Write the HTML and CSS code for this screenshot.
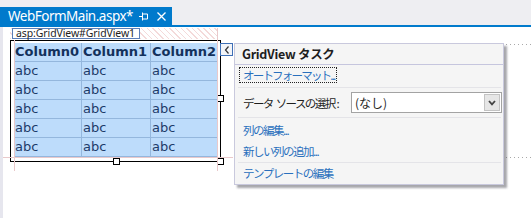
FILE: index.html
```html
<!DOCTYPE html>
<html lang="ja">
<head>
<meta charset="utf-8">
<title>WebFormMain.aspx</title>
<link rel="stylesheet" href="styles.css">
</head>
<body>
<div class="titlebar">
  <div class="tab">
    <span class="tab-title">WebFormMain.aspx*</span>
    <svg class="tab-pin" width="10" height="9" viewBox="0 0 10 9"><path d="M0 4.5H3.5M3.5 0.5V8.5M3.5 2H8.5V7H3.5" fill="none" stroke="#fff" stroke-width="1"/></svg>
    <svg class="tab-close" width="9" height="9" viewBox="0 0 9 9"><path d="M0.5 0.5L8.5 8.5M8.5 0.5L0.5 8.5" fill="none" stroke="#fff" stroke-width="1.3"/></svg>
  </div>
</div>
<div class="workspace">
  <div class="gutter"></div>
  <div class="surface">
    <div class="tagstrip"><span class="tag">asp:GridView#GridView1</span></div>
    <div class="selection">
      <div class="grid">
        <div class="cell head">Column0</div><div class="cell head">Column1</div><div class="cell head last">Column2</div>
        <div class="cell">abc</div><div class="cell">abc</div><div class="cell last">abc</div>
        <div class="cell">abc</div><div class="cell">abc</div><div class="cell last">abc</div>
        <div class="cell">abc</div><div class="cell">abc</div><div class="cell last">abc</div>
        <div class="cell">abc</div><div class="cell">abc</div><div class="cell last">abc</div>
        <div class="cell">abc</div><div class="cell">abc</div><div class="cell last">abc</div>
      </div>
      <span class="handle handle-right"></span>
      <span class="handle handle-bottom"></span>
      <span class="handle handle-corner"></span>
    </div>
    <div class="guide guide-h"></div>
    <div class="guide guide-v guide-left"></div>
    <div class="guide guide-v guide-right"></div>
    <div class="dots dots-top"></div>
    <div class="dots dots-bottom"></div>
    <div class="smarttag"><svg width="6" height="8" viewBox="0 0 6 8"><path d="M4.5 0.5L1.5 4L4.5 7.5" fill="none" stroke="#333" stroke-width="1.2"/></svg></div>
    <div class="tasks">
      <div class="tasks-title">GridView タスク</div>
      <div class="row row-auto"><span class="focus-link">オートフォーマット...</span></div>
      <div class="sep"></div>
      <div class="row row-ds">
        <span class="label">データ<span class="gap"></span>ソースの選択<span class="colon">:</span></span>
        <div class="select"><span class="select-text">(なし)</span><span class="select-btn"><svg width="8" height="6" viewBox="0 0 8 6"><path d="M1 1L4 4.3L7 1" fill="none" stroke="#444" stroke-width="1.8"/></svg></span></div>
      </div>
      <div class="sep"></div>
      <div class="row row-links">
        <span class="link">列の編集...</span>
        <span class="link">新しい列の追加...</span>
      </div>
      <div class="sep"></div>
      <div class="row row-template"><span class="link">テンプレートの編集</span></div>
    </div>
  </div>
</div>
</body>
</html>
```
FILE: styles.css
```css
html, body {
  margin: 0;
  padding: 0;
  background: #ffffff;
  width: 531px;
  height: 218px;
  overflow: hidden;
}

body {
  font-family: "Noto Sans", "Noto Sans CJK JP", sans-serif;
}

.titlebar {
  box-sizing: border-box;
  height: 27px;
  padding-top: 7px;
  background: #eeeef2;
  border-bottom: 2px solid #007acc;
}

.tab {
  width: 172px;
  height: 18px;
  background: #007acc;
  color: #ffffff;
  display: flex;
  align-items: center;
  box-sizing: border-box;
  padding-left: 8px;
}

.tab-title {
  font-size: 13.5px;
  letter-spacing: -0.5px;
  line-height: 18px;
  width: 131px;
  white-space: nowrap;
}

.tab-pin {
  margin-top: 1px;
}

.tab-close {
  margin-left: 8px;
  margin-top: 1px;
}

.workspace {
  display: flex;
  height: 191px;
}

.gutter {
  width: 3px;
  background: #e6e6ee;
}

.surface {
  flex: 1;
  position: relative;
  padding: 1px 0 0 7px;
}

.tagstrip {
  width: 208px;
  height: 11px;
  background: repeating-linear-gradient(45deg, #f4dada 0 1px, #ffffff 1px 4px);
  padding-left: 2px;
  box-sizing: border-box;
}

.tag {
  display: inline-block;
  box-sizing: border-box;
  width: 128px;
  height: 11px;
  border: 1px solid #5b7fb8;
  background: #ffffff;
  font-size: 10.5px;
  letter-spacing: -0.1px;
  line-height: 9px;
  color: #1e1e1e;
  padding-left: 3px;
  vertical-align: top;
  white-space: nowrap;
}

.selection {
  position: relative;
  box-sizing: border-box;
  width: 211px;
  height: 122px;
  margin-top: 1px;
  border: 1px solid #000000;
  padding: 2px 0 0 3px;
}

.grid {
  display: grid;
  grid-template-columns: 68px 69px 67px;
  grid-auto-rows: 19px;
  width: 204px;
  background: #bddcfb;
}

.cell {
  box-sizing: border-box;
  border-right: 1px solid #94b7dd;
  border-bottom: 1px solid #94b7dd;
  font-family: "DejaVu Sans", sans-serif;
  font-size: 13px;
  line-height: 18px;
  padding-left: 1px;
  color: #1d3b69;
  white-space: nowrap;
  overflow: hidden;
}

.cell.last {
  border-right: none;
}

.cell.head {
  font-weight: bold;
  color: #13315c;
}

.handle {
  position: absolute;
  width: 7px;
  height: 7px;
  box-sizing: border-box;
  border: 1px solid #000000;
  background: #ffffff;
}

.handle-right {
  right: -4px;
  top: 54px;
}

.handle-bottom {
  left: 102px;
  bottom: -4px;
}

.handle-corner {
  right: -4px;
  bottom: -4px;
}

.guide {
  position: absolute;
  background: #e9c9cb;
}

.guide-h {
  left: 0;
  top: 130px;
  width: 230px;
  height: 1px;
}

.guide-v {
  width: 1px;
}

.guide-left {
  left: 11px;
  top: 13px;
  height: 131px;
}

.guide-right {
  left: 214px;
  top: 1px;
  height: 143px;
}

.dots {
  position: absolute;
  left: 503px;
  width: 25px;
  height: 1px;
  background: repeating-linear-gradient(90deg, #a9a9a9 0 1px, transparent 1px 4px);
}

.dots-top {
  top: 17px;
}

.dots-bottom {
  top: 130px;
}

.smarttag {
  position: absolute;
  left: 217px;
  top: 16px;
  width: 13px;
  height: 13px;
  box-sizing: border-box;
  border: 1px solid #3d6fb6;
  background: #f2f4f8;
  display: flex;
  align-items: center;
  justify-content: center;
}

.tasks {
  position: absolute;
  left: 231px;
  top: 16px;
  width: 270px;
  height: 142px;
  box-sizing: border-box;
  border: 1px solid #c9c9dd;
  background: #f5f5f5;
  box-shadow: 3px 3px 2px rgba(60, 60, 70, 0.45);
  font-family: "Noto Sans CJK JP", sans-serif;
  font-size: 11.5px;
  color: #1e1e1e;
}

.tasks-title {
  height: 20px;
  line-height: 20px;
  border-bottom: 1px solid #c6c6de;
  padding-left: 7px;
  font-weight: bold;
  font-size: 12.5px;
  letter-spacing: -0.3px;
  white-space: nowrap;
}

.sep {
  height: 1px;
  margin: 0 2px 0 3px;
  background: #e4e4e8;
}

.row {
  white-space: nowrap;
}

.row-auto {
  height: 22px;
  padding: 2px 0 0 4px;
  box-sizing: border-box;
}

.focus-link {
  display: inline-block;
  box-sizing: border-box;
  height: 16px;
  line-height: 14px;
  border: 1px dotted #222222;
  padding: 0 1px 0 3px;
  color: #2a70bd;
  letter-spacing: -1.8px;
}

.row-ds {
  height: 29px;
  display: flex;
  align-items: center;
  padding-left: 8px;
}

.label {
  letter-spacing: -1.6px;
  display: flex;
  align-items: center;
}

.gap {
  display: inline-block;
  width: 3px;
}

.colon {
  margin-left: 2px;
  letter-spacing: 0;
}

.select {
  margin-left: auto;
  margin-right: 1px;
  width: 151px;
  height: 21px;
  box-sizing: border-box;
  border: 1px solid #a3a3a3;
  background: #ffffff;
  display: flex;
  align-items: flex-start;
  padding: 1px 1px 0 3px;
}

.select-text {
  font-size: 12px;
  line-height: 17px;
  flex: 1;
}

.select-btn {
  width: 16px;
  height: 17px;
  box-sizing: border-box;
  border: 1px solid #c3c3c3;
  background: #e6e6e6;
  display: flex;
  align-items: center;
  justify-content: center;
}

.row-links {
  height: 44px;
  padding: 2px 0 0 8px;
  box-sizing: border-box;
  display: flex;
  flex-direction: column;
}

.link {
  color: #2a70bd;
  letter-spacing: -1.5px;
  line-height: 21px;
}

.row-template {
  height: 21px;
  padding-left: 8px;
  display: flex;
  align-items: center;
}
```
